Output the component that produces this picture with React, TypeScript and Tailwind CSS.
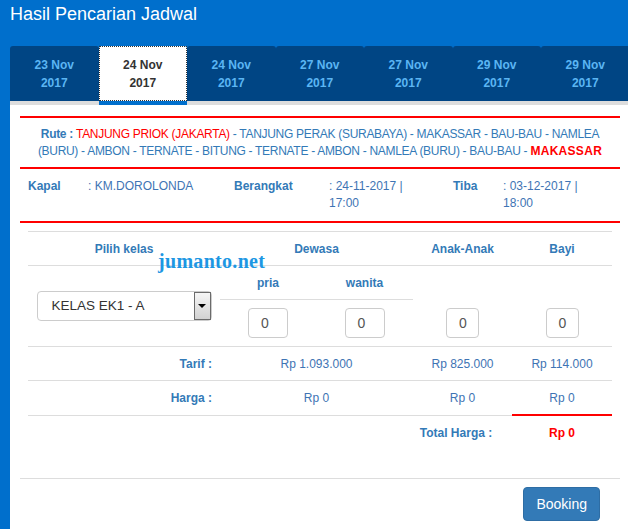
import React from 'react';

const TABS = [
  { d: '23 Nov', y: '2017' },
  { d: '24 Nov', y: '2017', active: true },
  { d: '24 Nov', y: '2017' },
  { d: '27 Nov', y: '2017' },
  { d: '27 Nov', y: '2017' },
  { d: '29 Nov', y: '2017' },
  { d: '29 Nov', y: '2017' },
];

const LABEL = 'text-[12px] font-bold text-[#337ab7]';
const VALUE = 'text-[12px] text-[#3e74b4]';
const CELL = 'flex items-center justify-center border-b border-[#ddd]';

function NumInput({ w }: { w: string }) {
  return (
    <div className={`${w} h-[30px] border border-[#ccc] rounded-[4px] bg-white pl-[12px] flex items-center text-[14px] text-[#555]`}>
      0
    </div>
  );
}

export default function App() {
  return (
    <div className="w-[628px] min-h-[529px] bg-[#006fcc] flex flex-col overflow-hidden font-['Liberation_Sans',Arial,sans-serif]">
      {/* Title */}
      <h1 className="h-[46px] pl-[10px] pt-[2px] text-[18px] leading-[24px] text-white">Hasil Pencarian Jadwal</h1>

      {/* Date tabs */}
      <div className="ml-[10px] flex overflow-hidden">
        {TABS.map((t, i) => (
          <div
            key={i}
            className={`w-[88.5px] shrink-0 h-[59px] rounded-t-[3px] border-b-4 ${
              t.active ? 'bg-white border-[#006fcc]' : 'bg-[#004584] border-[#ddd]'
            }`}>
            <div
              className={`h-full flex flex-col items-center justify-center text-[12px] leading-[18px] font-bold ${
                t.active ? 'border border-dotted border-[#333] text-[#333]' : 'text-[#5bb5f3]'
              }`}>
              <span>{t.d}</span>
              <span>{t.y}</span>
            </div>
          </div>
        ))}
      </div>

      {/* Content panel */}
      <div className="ml-[10px] flex-1 bg-white pl-[10px] pr-[8px] pt-[11px]">
        <div className="h-[2px] bg-[#ff0000]" />
        <p className="pt-[8px] pb-[7px] text-center text-[12px] tracking-[-0.3px] leading-[17px] text-[#337ab7]">
          <span className="font-bold">Rute : </span>
          <span className="text-[#ff0000]">TANJUNG PRIOK (JAKARTA)</span> - TANJUNG PERAK (SURABAYA) - MAKASSAR - BAU-BAU - NAMLEA
          <br />
          (BURU) - AMBON - TERNATE - BITUNG - TERNATE - AMBON - NAMLEA (BURU) - BAU-BAU -{' '}
          <span className="text-[#ff0000] font-bold tracking-[0.3px]">MAKASSAR</span>
        </p>
        <div className="h-[2px] bg-[#ff0000]" />

        <div className="pl-[8px] py-[9px] grid grid-cols-[60px_146px_95px_124px_50px_100px] text-[12px] leading-[17px]">
          <span className="font-bold text-[#337ab7]">Kapal</span>
          <span className="text-[#3e74b4]">: KM.DOROLONDA</span>
          <span className="font-bold text-[#337ab7]">Berangkat</span>
          <span className="text-[#3e74b4] w-[95px]">: 24-11-2017 | 17:00</span>
          <span className="font-bold text-[#337ab7]">Tiba</span>
          <span className="text-[#3e74b4] w-[95px]">: 03-12-2017 | 18:00</span>
        </div>
        <div className="h-[2px] bg-[#ff0000]" />

        {/* Fare table */}
        <div className="relative mx-[8px] mt-[8px] border-t border-[#ddd] grid grid-cols-[192px_96px_97px_99px_100px] grid-rows-[34px_34px_47px_34px_35px_36px]">
          <div className={`${CELL} ${LABEL} col-start-1 row-start-1`}>Pilih kelas</div>
          <div className={`${CELL} ${LABEL} col-start-2 col-span-2 row-start-1`}>Dewasa</div>
          <div className={`${CELL} ${LABEL} col-start-4 row-start-1`}>Anak-Anak</div>
          <div className={`${CELL} ${LABEL} col-start-5 row-start-1`}>Bayi</div>

          <div className={`${CELL} col-start-1 row-start-2 row-span-2`}>
            <div className="relative w-[175px] h-[30px] border border-[#ccc] rounded-[4px] bg-white flex items-center pl-[14px] text-[13.5px] text-[#333]">
              KELAS EK1 - A
              <div className="absolute right-0 top-0 bottom-0 w-[17px] border border-[#6b6b6b] bg-gradient-to-b from-[#f6f6f6] to-[#d2d2d2] flex items-center justify-center">
                <div className="w-0 h-0 border-l-[4px] border-r-[4px] border-t-[4px] border-l-transparent border-r-transparent border-t-black" />
              </div>
            </div>
          </div>
          <div className={`${CELL} ${LABEL} col-start-2 row-start-2`}>pria</div>
          <div className={`${CELL} ${LABEL} col-start-3 row-start-2`}>wanita</div>
          <div className="col-start-2 row-start-3 border-b border-[#ddd] flex items-center justify-center">
            <NumInput w="w-[40px]" />
          </div>
          <div className="col-start-3 row-start-3 border-b border-[#ddd] flex items-center justify-center">
            <NumInput w="w-[40px]" />
          </div>
          <div className="col-start-4 row-start-2 row-span-2 border-b border-[#ddd] flex items-end justify-center pb-[8px]">
            <NumInput w="w-[33px]" />
          </div>
          <div className="col-start-5 row-start-2 row-span-2 border-b border-[#ddd] flex items-end justify-center pb-[8px]">
            <NumInput w="w-[33px]" />
          </div>

          <div className={`${CELL} ${LABEL} col-start-1 row-start-4 justify-end! pr-[8px]`}>Tarif :</div>
          <div className={`${CELL} ${VALUE} col-start-2 col-span-2 row-start-4`}>Rp 1.093.000</div>
          <div className={`${CELL} ${VALUE} col-start-4 row-start-4`}>Rp 825.000</div>
          <div className={`${CELL} ${VALUE} col-start-5 row-start-4`}>Rp 114.000</div>

          <div className={`${CELL} ${LABEL} col-start-1 row-start-5 justify-end! pr-[8px]`}>Harga :</div>
          <div className={`${CELL} ${VALUE} col-start-2 col-span-2 row-start-5`}>Rp 0</div>
          <div className={`${CELL} ${VALUE} col-start-4 row-start-5`}>Rp 0</div>
          <div className={`flex items-center justify-center border-b-2 border-[#ff0000] pt-[1px] ${VALUE} col-start-5 row-start-5`}>Rp 0</div>

          <div className={`flex items-center justify-center pr-[13px] pb-[3px] ${LABEL} col-start-4 row-start-6`}>Total Harga :</div>
          <div className="flex items-center justify-center pb-[3px] text-[12px] font-bold text-[#ff0000] col-start-5 row-start-6">Rp 0</div>

          {/* watermark */}
          <span className="absolute left-[130px] top-[19px] text-[20px] leading-[20px] font-bold tracking-[0.3px] text-[#1d97e3] font-['Liberation_Serif','Times_New_Roman',serif] pointer-events-none">
            jumanto.net
          </span>
        </div>

        {/* Footer */}
        <div className="mt-[26px] border-t border-[#ddd] flex justify-end pr-[20px] pt-[8px]">
          <button className="h-[34px] px-[12px] rounded-[4px] bg-[#337ab7] border border-[#2e6da4] text-[14px] text-white">
            Booking
          </button>
        </div>
      </div>
    </div>
  );
}
